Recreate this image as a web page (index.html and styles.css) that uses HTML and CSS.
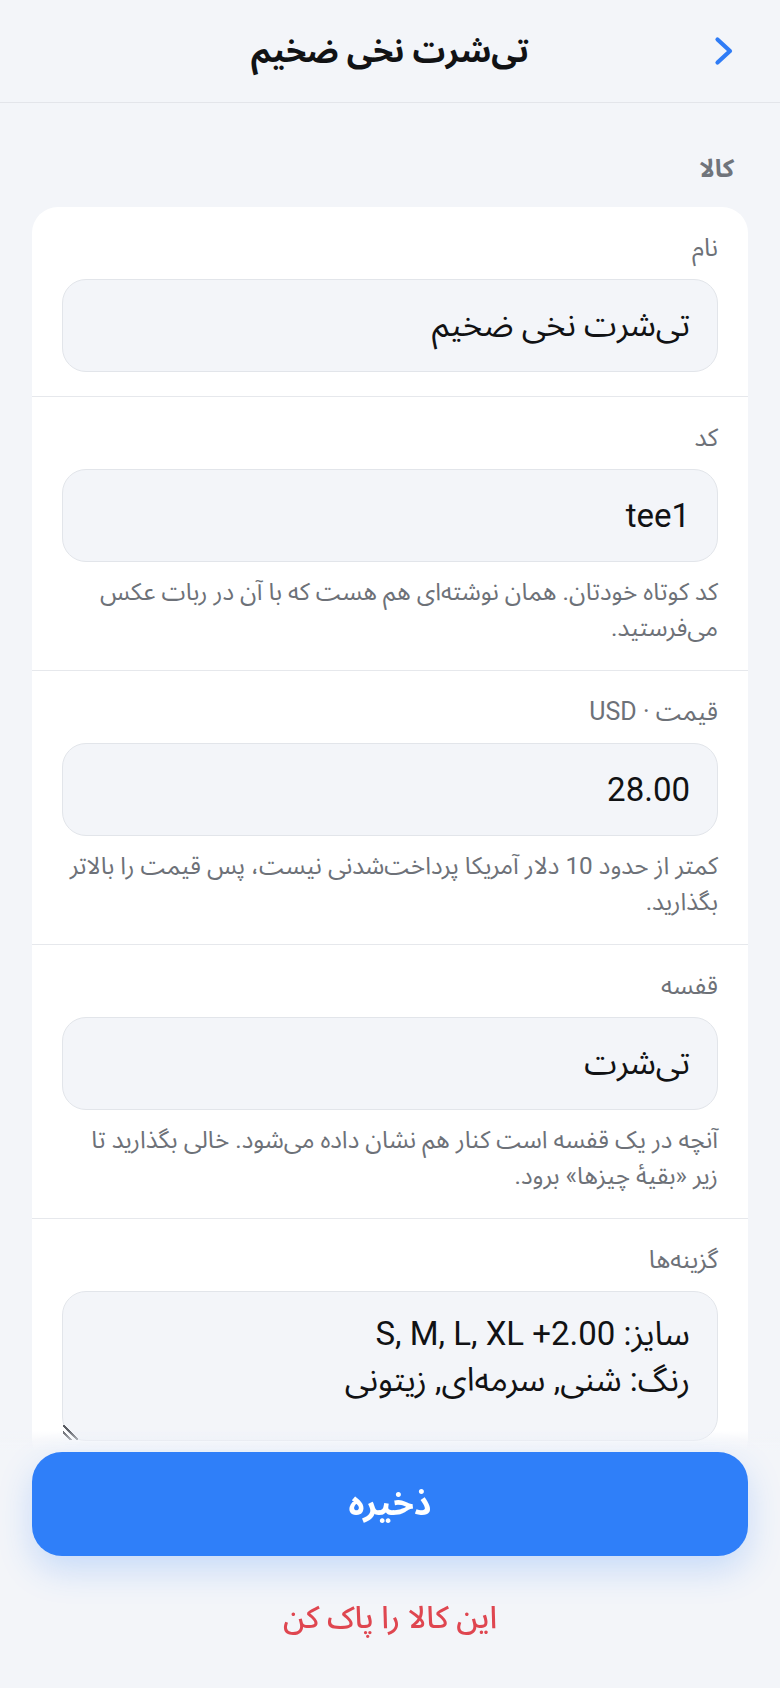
FILE: index.html
```html
<!DOCTYPE html>
<html lang="fa" dir="rtl">
<head>
<meta charset="utf-8">
<meta name="viewport" content="width=device-width, initial-scale=1">
<title>تی‌شرت نخی ضخیم</title>
<link rel="stylesheet" href="styles.css">
</head>
<body>
<header class="topbar">
  <button class="back" type="button" aria-label="بازگشت">
    <svg class="back-icon" viewBox="0 0 20 30" width="20" height="30" aria-hidden="true">
      <polyline points="3.5,3.5 16,15 3.5,26.5" fill="none" stroke="currentColor" stroke-width="4.2" stroke-linecap="round" stroke-linejoin="round"/>
    </svg>
  </button>
  <h1 class="title">تی‌شرت نخی ضخیم</h1>
  <span class="spacer"></span>
</header>

<main class="content">
  <h2 class="section-label">کالا</h2>
  <section class="card">
    <div class="field">
      <label class="field-label" for="f-name">نام</label>
      <input id="f-name" class="input" type="text" value="تی‌شرت نخی ضخیم">
    </div>
    <div class="field">
      <label class="field-label" for="f-code">کد</label>
      <input id="f-code" class="input" type="text" value="tee1">
      <p class="help">کد کوتاه خودتان. همان نوشته‌ای هم هست که با آن در ربات عکس می‌فرستید.</p>
    </div>
    <div class="field">
      <label class="field-label" for="f-price">قیمت · USD</label>
      <input id="f-price" class="input" type="text" value="28.00">
      <p class="help">کمتر از حدود 10 دلار آمریکا پرداخت‌شدنی نیست، پس قیمت را بالاتر بگذارید.</p>
    </div>
    <div class="field">
      <label class="field-label" for="f-shelf">قفسه</label>
      <input id="f-shelf" class="input" type="text" value="تی‌شرت">
      <p class="help">آنچه در یک قفسه است کنار هم نشان داده می‌شود. خالی بگذارید تا زیر «بقیهٔ چیزها» برود.</p>
    </div>
    <div class="field">
      <label class="field-label" for="f-options">گزینه‌ها</label>
      <textarea id="f-options" class="input textarea">سایز: S, M, L, XL +2.00
رنگ: شنی, سرمه‌ای, زیتونی</textarea>
    </div>
  </section>
</main>

<footer class="actions">
  <button class="save" type="button">ذخیره</button>
  <button class="delete" type="button">این کالا را پاک کن</button>
</footer>
</body>
</html>
```

FILE: styles.css
```css
* {
  box-sizing: border-box;
}

html, body {
  margin: 0;
  padding: 0;
}

body {
  background: #f3f5f9;
  color: #111214;
  font-family: Roboto, "Noto Sans Arabic", "Noto Naskh Arabic", "DejaVu Sans", sans-serif;
  direction: rtl;
}

/* Top bar */
.topbar {
  height: 103px;
  display: grid;
  grid-template-columns: 1fr auto 1fr;
  align-items: center;
  padding: 0 46px;
  border-bottom: 1px solid #e3e5ea;
  background: #f3f5f9;
}

.back {
  justify-self: start;
  display: flex;
  align-items: center;
  padding: 0;
  margin: 0;
  border: 0;
  background: none;
  color: #2f7cf6;
  cursor: pointer;
}

.back-icon {
  display: block;
}

.title {
  margin: 0;
  font-size: 32.5px;
  font-weight: 700;
  line-height: 44px;
  color: #111214;
}

/* Content */
.content {
  padding: 48px 32px 320px;
}

.section-label {
  margin: 0 14px 20px 0;
  font-size: 25px;
  font-weight: 700;
  line-height: 36px;
  color: #70747b;
}

.card {
  background: #ffffff;
  border-radius: 26px;
  overflow: hidden;
}

.field {
  padding: 24px 30px 24px;
  border-top: 1px solid #e6e8ec;
}

.field:first-child {
  border-top: 0;
}

.field-label {
  display: block;
  font-size: 25px;
  line-height: 34px;
  color: #6d7178;
  margin-bottom: 14px;
}

.input {
  display: block;
  width: 100%;
  height: 93px;
  padding: 0 27px;
  border: 1.5px solid #e2e5ea;
  border-radius: 24px;
  background: #f3f5f9;
  color: #111214;
  font-family: inherit;
  font-size: 33px;
  line-height: 46px;
  text-align: right;
  direction: rtl;
  outline: none;
}

.textarea {
  height: 150px;
  padding: 19px 27px 10px;
  resize: vertical;
  overflow: hidden;
}

.textarea::-webkit-resizer {
  background: linear-gradient(45deg, transparent 0 22%, #5b5e64 22% 31%, transparent 31% 46%, #5b5e64 46% 55%, transparent 55%);
}

.help {
  margin: 12px 0 0;
  font-size: 24.3px;
  line-height: 36px;
  color: #6d7178;
}

/* Bottom actions overlay */
.actions {
  position: fixed;
  left: 0;
  right: 0;
  bottom: 0;
  display: flex;
  flex-direction: column;
  align-items: center;
  padding: 40px 32px 50px;
  background: linear-gradient(to bottom, rgba(243, 245, 249, 0) 0, rgba(243, 245, 249, 0) 18px, rgba(243, 245, 249, 0.7) 30px, #f3f5f9 40px);
}

.save {
  width: 100%;
  height: 104px;
  border: 0;
  border-radius: 30px;
  background: #2f7ff9;
  color: #ffffff;
  font-family: inherit;
  font-size: 34px;
  font-weight: 700;
  box-shadow: 0 14px 34px rgba(47, 127, 249, 0.22);
  cursor: pointer;
}

.delete {
  margin-top: 42px;
  padding: 0;
  border: 0;
  background: none;
  color: #df4650;
  font-family: inherit;
  font-size: 31px;
  font-weight: 500;
  line-height: 40px;
  cursor: pointer;
}
```
